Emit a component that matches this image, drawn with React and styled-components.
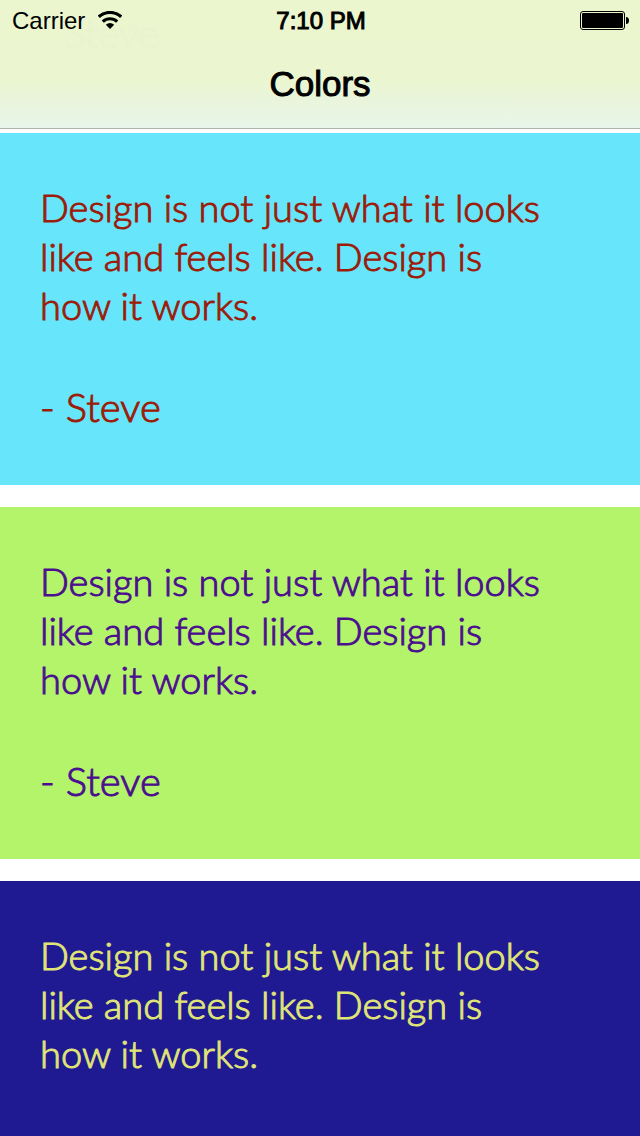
import React from "react";
import styled, { createGlobalStyle } from "styled-components";

const GlobalStyle = createGlobalStyle`
  *, *::before, *::after { box-sizing: border-box; }
  body { margin: 0; background: #fff; }
  h1, p, blockquote, figure { margin: 0; }
`;

const Screen = styled.div`
  display: flex;
  flex-direction: column;
  height: 100vh;
  overflow: hidden;
`;

const Header = styled.header`
  position: relative;
  flex: none;
  background: linear-gradient(#ebf6ce 0, #ebf6d0 60%, #e9f5dc 80%, #e8f6ea 100%);
  border-bottom: 1px solid #b0b2b0;
  color: #000;
  font-family: "Liberation Sans", Arial, sans-serif;
`;

const StatusBar = styled.div`
  position: relative;
  display: grid;
  grid-template-columns: 1fr auto 1fr;
  align-items: center;
  height: 42px;
  padding: 0 10px 0 12px;
  font-size: 24px;
  line-height: 42px;
`;

const Carrier = styled.div`
  display: flex;
  align-items: center;
  gap: 13px;
`;

const Time = styled.time`
  -webkit-text-stroke: 1px currentColor;
`;

const Battery = styled.svg`
  justify-self: end;
`;

const TitleBar = styled.div`
  display: flex;
  align-items: center;
  justify-content: center;
  height: 86px;
  padding-bottom: 2px;
`;

const Title = styled.h1`
  font-size: 35px;
  font-weight: 400;
  line-height: 40px;
  -webkit-text-stroke: 1px currentColor;
`;

const Ghost = styled.span`
  position: absolute;
  top: 8px;
  left: 64px;
  color: #e9f4cf;
  font: 300 40px/50px Lato, sans-serif;
  -webkit-text-stroke: 1px currentColor;
`;

const Feed = styled.main`
  display: flex;
  flex-direction: column;
  flex: 1;
  gap: 22px;
  min-height: 0;
  padding-top: 4px;
  overflow: hidden;
`;

const Card = styled.figure`
  flex: none;
  min-height: 352px;
  padding: 50px 80px 50px 40px;
  background: ${(p) => p.$background};
  color: ${(p) => p.$color};
  font-family: Lato, sans-serif;
  font-weight: 300;
  -webkit-text-stroke: 1px currentColor;
`;

const Quote = styled.blockquote`
  font-size: 38px;
  line-height: 49px;
`;

const Author = styled.figcaption`
  margin-top: 52px;
  font-size: 40px;
  line-height: 50px;
`;

const cards = [
  { background: "#66e5fb", color: "#9b1c09", author: "Steve" },
  { background: "#b3f46b", color: "#4b0f8e", author: "Steve" },
  { background: "#1f1a91", color: "#e0e577" },
];

function WifiIcon() {
  return (
    <svg width="24" height="20" viewBox="0 0 24 20" aria-hidden="true">
      <path d="M.8 5.8C7 0 17 0 23.2 5.8" fill="none" stroke="#000" strokeWidth="3.2" />
      <path d="M4.8 10.6C9 6.8 15 6.8 19.2 10.6" fill="none" stroke="#000" strokeWidth="3.2" />
      <path d="M7.8 13.8Q12 10.4 16.2 13.8L12 18Z" />
    </svg>
  );
}

function BatteryIcon() {
  return (
    <Battery width="50" height="20" viewBox="0 0 50 20" aria-hidden="true">
      <rect x=".5" y=".5" width="44" height="18" rx="2.5" fill="none" stroke="#000" />
      <rect x="2" y="2" width="41" height="15" rx="1" />
      <path d="M46 6Q49 6 49 9.5T46 13Z" />
    </Battery>
  );
}

export default function App() {
  return (
    <Screen>
      <GlobalStyle />
      <Header>
        <Ghost aria-hidden="true">Steve</Ghost>
        <StatusBar>
          <Carrier>
            <span>Carrier</span>
            <WifiIcon />
          </Carrier>
          <Time>7:10 PM</Time>
          <BatteryIcon />
        </StatusBar>
        <TitleBar>
          <Title>Colors</Title>
        </TitleBar>
      </Header>
      <Feed>
        {cards.map((card) => (
          <Card key={card.background} $background={card.background} $color={card.color}>
            <Quote>
              Design is not just what it looks
              <br />
              like and feels like. Design is
              <br />
              how it works.
            </Quote>
            {card.author && <Author>- {card.author}</Author>}
          </Card>
        ))}
      </Feed>
    </Screen>
  );
}
